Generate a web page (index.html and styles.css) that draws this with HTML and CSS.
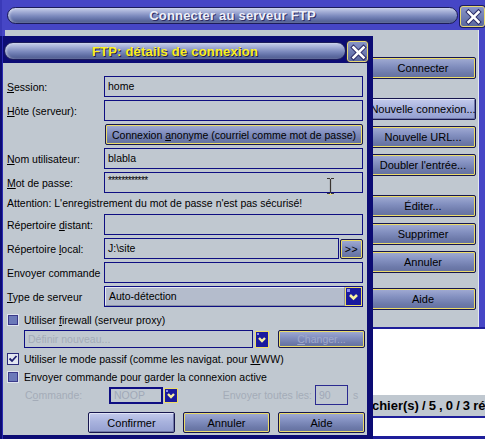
FILE: index.html
```html
<!DOCTYPE html>
<html lang="fr">
<head>
<meta charset="utf-8">
<link rel="stylesheet" href="styles.css">
</head>
<body>
<div class="win outer">
  <div class="titlebar">
    <div class="pill pill-outer"><span class="title title-light">Connecter au serveur FTP</span></div>
    <div class="close close-outer">
      <svg width="25" height="21" viewBox="0 0 25 21"><g stroke-linecap="square"><line x1="7.5" y1="5" x2="17.5" y2="15" stroke="#2a2a66" stroke-width="4.5"/><line x1="17.5" y1="5" x2="7.5" y2="15" stroke="#2a2a66" stroke-width="4.5"/><line x1="7.5" y1="5" x2="17.5" y2="15" stroke="#fff" stroke-width="2.6"/><line x1="17.5" y1="5" x2="7.5" y2="15" stroke="#fff" stroke-width="2.6"/></g></svg>
    </div>
  </div>
  <div class="obody">
    <div class="otop">
      <div class="ocol">
        <div class="btn obtn"><span>Connecter</span></div>
        <div class="btn btn-hi obtn gap-lg"><span>Nouvelle connexion...</span></div>
        <div class="btn obtn gap-sm"><span>Nouvelle URL...</span></div>
        <div class="btn obtn gap-sm"><span>Doubler l'entrée...</span></div>
        <div class="btn obtn gap-lg"><span>Éditer...</span></div>
        <div class="btn obtn gap-sm"><span>Supprimer</span></div>
        <div class="btn obtn gap-sm"><span>Annuler</span></div>
        <div class="btn obtn gap-md"><span>Aide</span></div>
      </div>
    </div>
    <div class="olist"></div>
    <div class="ostatus"><span>fichier(s) / 5 , 0 / 3 répertoire(s)</span></div>
    <div class="ofield"></div>
  </div>
</div>

<div class="win inner">
  <div class="titlebar ititle">
    <div class="pill pill-inner"><span class="title title-yellow">FTP: détails de connexion</span></div>
    <div class="close close-inner">
      <svg width="21" height="21" viewBox="0 0 21 21"><g stroke-linecap="square"><line x1="5.5" y1="5.5" x2="15.5" y2="15.5" stroke="#2a2a66" stroke-width="4.5"/><line x1="15.5" y1="5.5" x2="5.5" y2="15.5" stroke="#2a2a66" stroke-width="4.5"/><line x1="5.5" y1="5.5" x2="15.5" y2="15.5" stroke="#fff" stroke-width="2.6"/><line x1="15.5" y1="5.5" x2="5.5" y2="15.5" stroke="#fff" stroke-width="2.6"/></g></svg>
    </div>
  </div>
  <div class="ibody">
    <div class="form">
      <div class="row"><span class="lbl"><u>S</u>ession:</span><div class="field">home</div></div>
      <div class="row"><span class="lbl"><u>H</u>ôte (serveur):</span><div class="field"></div></div>
      <div class="row"><span class="lbl"></span><div class="btn anon"><span>Connexion <u>a</u>nonyme (courriel comme mot de passe)</span></div></div>
      <div class="row"><span class="lbl"><u>N</u>om utilisateur:</span><div class="field">blabla</div></div>
      <div class="row"><span class="lbl"><u>M</u>ot de passe:</span><div class="field pwd">************</div></div>
      <div class="warn">Attention: L'enregistrement du mot de passe n'est pas sécurisé!</div>
      <div class="row"><span class="lbl">Répertoire <u>d</u>istant:</span><div class="field"></div></div>
      <div class="row"><span class="lbl">Répertoire <u>l</u>ocal:</span><div class="field">J:\site</div><div class="btn browse"><span>&gt;&gt;</span></div></div>
      <div class="row"><span class="lbl">Envoyer commande</span><div class="field"></div></div>
      <div class="row"><span class="lbl"><u>T</u>ype de serveur</span>
        <div class="select"><div class="selval">Auto-détection</div><div class="arrow arrow-sel">
          <svg width="15" height="17" viewBox="0 0 15 17"><rect x="1" y="1" width="3" height="3" fill="#8c8cf0"/><polyline points="4,7 7.5,10.5 11,7" fill="none" stroke="#f8f0a0" stroke-width="2.6"/></svg>
        </div></div>
      </div>
    </div>
    <div class="opts">
      <div class="cbrow r-fw"><span class="cb"></span><span>Utiliser <u>f</u>irewall (serveur proxy)</span></div>
      <div class="defrow">
        <div class="field dis defin">Définir nouveau...</div>
        <div class="arrow arrow-sm"><svg width="12" height="15" viewBox="0 0 12 15"><rect x="1" y="1" width="2" height="2" fill="#8c8cf0"/><polyline points="3,6 6,9 9,6" fill="none" stroke="#f8f0a0" stroke-width="2.4"/></svg></div>
        <div class="btn chg"><span class="distext"><u>C</u>hanger...</span></div>
      </div>
      <div class="cbrow r-pa"><span class="cb cb-on"><svg width="10" height="10" viewBox="0 0 10 10"><polyline points="1.5,4.5 4,7 8.5,2" fill="none" stroke="#202070" stroke-width="1.8"/></svg></span><span>Utiliser le mode passif (comme les navigat. pour <u>W</u>WW)</span></div>
      <div class="cbrow r-ka"><span class="cb"></span><span>Envoyer commande pour garder la connexion active</span></div>
      <div class="cmdrow">
        <span class="cmdlbl dis-t">C<u>o</u>mmande:</span>
        <div class="noop">NOOP</div>
        <div class="arrow arrow-cmd"><svg width="12" height="13" viewBox="0 0 12 13"><rect x="1" y="1" width="2" height="2" fill="#8c8cf0"/><polyline points="3,5 6,8 9,5" fill="none" stroke="#f8f0a0" stroke-width="2.4"/></svg></div>
        <span class="every dis-t">Envoyer toutes les:</span>
        <div class="secs">90</div>
        <span class="sunit dis-t">s</span>
      </div>
      <div class="btnrow">
        <div class="btn btn-hi dbtn"><span>Confirmer</span></div>
        <div class="btn dbtn"><span>Annuler</span></div>
        <div class="btn dbtn"><span>Aide</span></div>
      </div>
    </div>
  </div>
  <svg class="ibeam" width="9" height="18" viewBox="0 0 9 18"><path d="M1 1.5h3M5 1.5h3M4.5 2v14M1 16.5h3M5 16.5h3" stroke="#3a3530" stroke-width="1.2" fill="none"/><rect x="3" y="17" width="3" height="1" fill="#f0e070"/></svg>
</div>
</body>
</html>
```

FILE: styles.css
```css
* { box-sizing: border-box; margin: 0; padding: 0; }
html, body { width: 485px; height: 439px; overflow: hidden; }
body {
  position: relative;
  background: #3a3ab8;
  font-family: "Liberation Sans", Arial, sans-serif;
  font-size: 10.5px;
  color: #000;
}
u { text-decoration: underline; text-underline-offset: 1px; }

.win { position: absolute; }

/* ---------- title bars ---------- */
.titlebar { display: flex; align-items: flex-start; }
.pill {
  display: flex; align-items: center; justify-content: center;
  border: 1px solid #1c1c5a;
  border-radius: 9px;
  background: linear-gradient(#c8d0ea 0%, #a4aed6 25%, #7a88bc 55%, #5e6ca2 80%, #4e5a8e 100%);
  box-shadow: inset 2px 0 2px rgba(255,255,255,0.35);
}
.title { font-weight: bold; font-size: 13px; letter-spacing: 0.2px; white-space: nowrap; }
.title-light { color: #eef0fa; text-shadow: 1px 1px 0 #2c2c64; }
.title-yellow { color: #fcf020; text-shadow: 1px 1px 0 #1e1e50; }
.close {
  border: 1px solid #e8d870;
  border-radius: 3px;
  background: linear-gradient(#8894c8, #5a68a0);
  box-shadow: 0 0 0 1px #1c1c5a;
}
.close svg { display: block; }

/* ---------- outer window ---------- */
.outer { left: 2px; top: 0; width: 483px; height: 439px; background: #4646c6; }
.outer .titlebar { height: 30px; }
.pill-outer { margin-left: 5px; margin-top: 7px; width: 451px; height: 17px; }
.close-outer { margin-left: 2px; margin-top: 6px; width: 25px; height: 21px; }

.obody { margin-left: 3px; width: 480px; height: 409px; display: flex; flex-direction: column; }
.otop { height: 297px; background: #c0c8d0; border-right: 6px solid #4646c6; box-shadow: inset -1px 0 0 #e4e8ee; }
.ocol { display: flex; flex-direction: column; align-items: flex-end; padding-top: 27px; padding-right: 3px; }
.obtn { width: 106px; height: 22px; font-size: 11px; }
.gap-lg { margin-top: 19px; }
.gap-sm { margin-top: 6px; }
.gap-md { margin-top: 15px; }

.olist { height: 68px; background: #fff; border-top: 2px solid #1e1e9a; }
.ostatus {
  height: 21px; background: #c0c8d0;
  font-weight: bold; font-size: 13px; line-height: 21px;
  white-space: nowrap; overflow: hidden; padding-left: 359px;
  word-spacing: -0.5px;
}
.ofield { flex: 1; background: #fff; border-top: 2px solid #1e1e9a; border-bottom: 3px solid #1e1e9a; }

/* ---------- buttons ---------- */
.btn {
  display: flex; align-items: center; justify-content: center;
  border: 1px solid #16164e;
  border-radius: 2px;
  background: linear-gradient(#a2acd4 0%, #8390c0 40%, #6d7aaa 75%, #64709e 100%);
  box-shadow: inset 0 0 0 1px #ecdc68;
  white-space: nowrap;
  color: #000;
}
.btn-hi {
  background: linear-gradient(#c4cbec 0%, #a9b3de 45%, #949fd0 100%);
  box-shadow: inset 1px 1px 0 #e0e4f6, inset -1px -1px 0 #7078a8;
}

/* ---------- inner dialog ---------- */
.inner { left: 0; top: 36px; width: 373px; height: 403px; background: #0c0c74; box-shadow: inset 2px 0 0 #0c0c74, inset 3px 0 0 #2a2ab0; }
.ititle { height: 27px; }
.pill-inner { margin-left: 4px; margin-top: 6px; width: 342px; height: 18px; }
.close-inner { margin-left: 1px; margin-top: 5px; width: 21px; height: 21px; }
.ibody { margin-left: 3px; width: 364px; height: 372px; background: #c0c8d0; padding: 13px 4px 0 4px; }

.form { display: flex; flex-direction: column; gap: 3px; }
.row { display: flex; align-items: center; height: 21px; }
.lbl { width: 97px; flex: none; white-space: nowrap; }
.field {
  flex: 1; height: 21px;
  border: 1px solid #0e0e82;
  padding-left: 3px; line-height: 19px;
  white-space: nowrap; overflow: hidden;
}
.pwd { font-size: 10px; line-height: 15px; letter-spacing: -0.6px; }
.anon { flex: 1; height: 21px; margin-left: 1px; }
.warn { height: 15px; line-height: 15px; white-space: nowrap; }
.browse { width: 23px; height: 20px; margin-left: 1px; flex: none; letter-spacing: 0.5px; }

.select { flex: 1; height: 21px; display: flex; border: 1px solid #0e0e82; }
.selval {
  flex: 1; padding-left: 3px; line-height: 17px;
  background: #b4bccc;
  border: 1px solid; border-color: #e6eaf0 #8890a8 #8890a8 #e6eaf0;
}
.arrow {
  flex: none; background: #1a1a9e;
  border: 1px solid #ecdc68;
  display: flex; align-items: center; justify-content: center;
}
.arrow svg { display: block; }
.arrow-sel { width: 17px; }

.opts { display: flex; flex-direction: column; }
.cbrow { display: flex; align-items: center; height: 14px; white-space: nowrap; }
.r-fw { margin-top: 6px; }
.r-pa { margin-top: 4px; }
.r-ka { margin-top: 4px; }
.cb {
  width: 12px; height: 12px; flex: none; margin-right: 5px;
  border: 1px solid #dfe3ee;
  background: #6b79b9;
  box-shadow: inset 0 0 0 1px #3a3a8a;
}
.cb-on {
  background: #e2e6f0;
  border: 1px solid #2a2a7a;
  box-shadow: none;
  display: flex; align-items: center; justify-content: center;
}
.cb-on svg { display: block; }

.defrow { display: flex; align-items: center; height: 18px; margin-top: 3px; padding-left: 17px; margin-right: -2px; }
.dis { color: #a4acb8; }
.defin { flex: none; width: 229px; height: 18px; line-height: 16px; }
.arrow-sm { width: 14px; height: 17px; margin-left: 2px; }
.chg { width: 87px; height: 18px; margin-left: 9px; }
.distext { color: #a0aacc; }

.cmdrow { display: flex; align-items: center; height: 20px; margin-top: 1px; white-space: nowrap; }
.dis-t { color: #a4acb8; }
.cmdlbl { width: 102px; padding-left: 18px; flex: none; }
.noop { width: 54px; height: 17px; border: 2px solid #0e0e82; color: #a0a8b8; padding-left: 3px; line-height: 13px; flex: none; }
.arrow-cmd { width: 14px; height: 15px; margin-left: 1px; }
.every { width: 134px; text-align: right; flex: none; }
.secs { width: 33px; height: 20px; margin-left: 3px; border: 1px solid #2a2a90; color: #a0a8b8; padding-left: 3px; line-height: 18px; flex: none; }
.sunit { margin-left: 5px; }

.btnrow { display: flex; justify-content: flex-end; gap: 8px; margin-top: 7px; margin-right: -2px; }
.dbtn { width: 87px; height: 21px; font-size: 11px; }

.ibeam { position: absolute; left: 326px; top: 141px; }
```
